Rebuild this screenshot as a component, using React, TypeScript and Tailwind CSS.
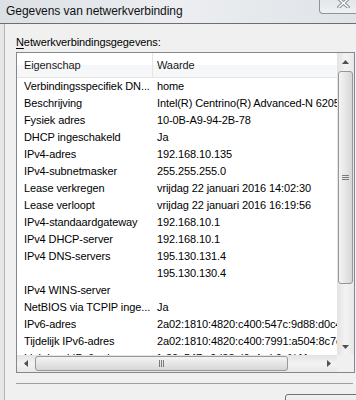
import React from "react";

const rows: [string, string][] = [
  ["Verbindingsspecifiek DN...", "home"],
  ["Beschrijving", "Intel(R) Centrino(R) Advanced-N 6205"],
  ["Fysiek adres", "10-0B-A9-94-2B-78"],
  ["DHCP ingeschakeld", "Ja"],
  ["IPv4-adres", "192.168.10.135"],
  ["IPv4-subnetmasker", "255.255.255.0"],
  ["Lease verkregen", "vrijdag 22 januari 2016 14:02:30"],
  ["Lease verloopt", "vrijdag 22 januari 2016 16:19:56"],
  ["IPv4-standaardgateway", "192.168.10.1"],
  ["IPv4 DHCP-server", "192.168.10.1"],
  ["IPv4 DNS-servers", "195.130.131.4"],
  ["", "195.130.130.4"],
  ["IPv4 WINS-server", ""],
  ["NetBIOS via TCPIP inge...", "Ja"],
  ["IPv6-adres", "2a02:1810:4820:c400:547c:9d88:d0c4:ab0a"],
  ["Tijdelijk IPv6-adres", "2a02:1810:4820:c400:7991:a504:8c7e:1f2b"],
  ["Link-local IPv6-adres", "fe80::547c:9d88:d0c4:ab0a%11"],
];

function Arrow({ dir }: { dir: "up" | "down" | "left" | "right" }) {
  const pts: Record<string, string> = {
    up: "0,4 3.5,0 7,4",
    down: "0,0 3.5,4 7,0",
    left: "4,0 0,3.5 4,7",
    right: "0,0 4,3.5 0,7",
  };
  const vertical = dir === "up" || dir === "down";
  return (
    <svg width={vertical ? 7 : 4} height={vertical ? 4 : 7} viewBox={vertical ? "0 0 7 4" : "0 0 4 7"}>
      <polygon points={pts[dir]} fill="#505050" />
    </svg>
  );
}

export default function App() {
  return (
    <div className="w-[356px] h-[400px] overflow-hidden bg-[#f0f0f0] flex flex-col font-['Liberation_Sans',Arial,sans-serif] text-black">
      {/* Title bar */}
      <div className="h-[24px] shrink-0 flex items-start border-b border-[#6e6e6e] bg-gradient-to-r from-[#dce0e5] via-[#eceef1] to-[#dfe3e7]">
        <div className="flex-1 pl-[6px] pt-[3px] text-[12px] tracking-[-0.05px] leading-[17px] text-[#111]">
          Gegevens van netwerkverbinding
        </div>
        <div className="w-[48px] h-[14px] mr-[-11px] border border-t-0 border-[#8e949b] rounded-bl-[4px] bg-gradient-to-b from-[#e3e6ea] to-[#eef0f2] flex justify-center items-start">
          <svg width="13" height="10" viewBox="0 0 13 10" className="mt-[-2px]">
            <path d="M2 1 L11 9 M11 1 L2 9" stroke="#8a8f96" strokeWidth="3.4" strokeLinecap="square" />
            <path d="M2 1 L11 9 M11 1 L2 9" stroke="#ffffff" strokeWidth="1.4" strokeLinecap="square" />
          </svg>
        </div>
      </div>

      {/* Body */}
      <div className="flex-1 flex text-[11px] tracking-[-0.1px]">
        <div className="w-[5px] shrink-0 bg-[#e6e6e6] border-r border-[#b4b4b4]" />
        <div className="flex-1 flex flex-col pl-[11px]">
          <div className="mt-[11px] h-[15px] leading-[15px]">
            <span className="underline underline-offset-[2px]">N</span>etwerkverbindingsgegevens:
          </div>

          {/* List box */}
          <div className="mt-[2px] w-[339px] h-[321px] border border-[#828790] bg-white flex flex-col">
            <div className="flex h-[302px]">
              {/* list */}
              <div className="w-[320px] overflow-hidden flex flex-col">
                <div className="h-[25px] shrink-0 flex border-b border-[#e5e5e5] bg-gradient-to-b from-white from-50% to-[#f6f7f9] to-50%">
                  <div className="w-[136px] shrink-0 pl-[7px] flex items-center border-r border-[#e5e5e5] text-[#1a1a1a]">
                    Eigenschap
                  </div>
                  <div className="pl-[4px] flex items-center text-[#1a1a1a] whitespace-nowrap">Waarde</div>
                </div>
                {rows.map(([k, v], i) => (
                  <div key={i} className="h-[17px] shrink-0 flex items-center leading-[17px] whitespace-nowrap">
                    <div className="w-[136px] shrink-0 pl-[7px] overflow-hidden">{k}</div>
                    <div className="pl-[4px]">{v}</div>
                  </div>
                ))}
              </div>
              {/* vertical scrollbar */}
              <div className="w-[17px] shrink-0 flex flex-col bg-gradient-to-r from-[#e3e3e3] via-[#f3f3f3] to-[#e8e8e8]">
                <div className="h-[17px] shrink-0 flex items-center justify-center">
                  <Arrow dir="up" />
                </div>
                <div className="h-[1px] shrink-0" />
                <div className="h-[213px] shrink-0 mx-[1px] rounded-[3px] border border-[#979797] bg-gradient-to-r from-[#f4f4f4] via-[#e6e6e6] to-[#d6d6d6] flex items-center justify-center">
                  <div className="flex flex-col gap-[1px]">
                    <div className="w-[7px] h-[1px] bg-[#7a7a7a]" />
                    <div className="w-[7px] h-[1px] bg-[#7a7a7a]" />
                    <div className="w-[7px] h-[1px] bg-[#7a7a7a]" />
                  </div>
                </div>
                <div className="flex-1" />
                <div className="h-[17px] shrink-0 flex items-center justify-center">
                  <Arrow dir="down" />
                </div>
              </div>
            </div>
            {/* horizontal scrollbar */}
            <div className="flex h-[17px]">
              <div className="w-[320px] flex bg-gradient-to-b from-[#e3e3e3] via-[#f3f3f3] to-[#e8e8e8]">
                <div className="w-[17px] shrink-0 flex items-center justify-center">
                  <Arrow dir="left" />
                </div>
                <div className="w-[1px] shrink-0" />
                <div className="w-[253px] shrink-0 my-[1px] rounded-[3px] border border-[#979797] bg-gradient-to-b from-[#f4f4f4] via-[#e6e6e6] to-[#d6d6d6] flex items-center justify-center">
                  <div className="flex gap-[1px]">
                    <div className="w-[1px] h-[7px] bg-[#7a7a7a]" />
                    <div className="w-[1px] h-[7px] bg-[#7a7a7a]" />
                    <div className="w-[1px] h-[7px] bg-[#7a7a7a]" />
                  </div>
                </div>
                <div className="flex-1" />
                <div className="w-[17px] shrink-0 flex items-center justify-center">
                  <Arrow dir="right" />
                </div>
              </div>
              <div className="w-[17px] bg-[#f0f0f0]" />
            </div>
          </div>

          {/* separator */}
          <div className="mt-[10px] w-[337px] h-[1px] bg-[#a0a0a0]" />
          <div className="mt-[10px] flex justify-end">
            <div className="w-[88px] h-[20px] mr-[-17px] rounded-[3px] border border-[#707070] bg-gradient-to-b from-[#f2f2f2] to-[#dddddd]" />
          </div>
        </div>
      </div>
    </div>
  );
}
